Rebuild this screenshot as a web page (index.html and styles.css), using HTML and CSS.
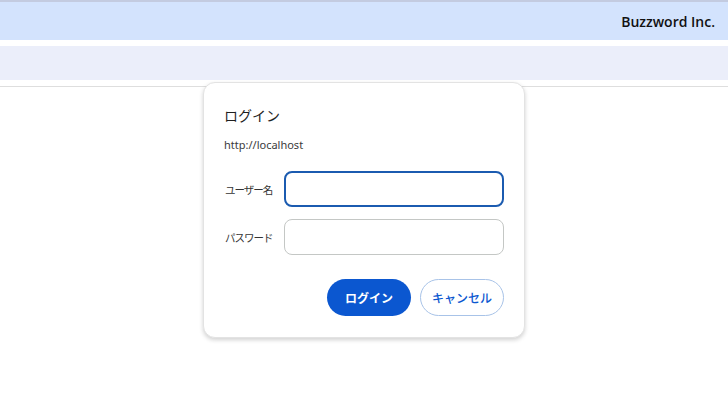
FILE: index.html
```html
<!DOCTYPE html>
<html lang="ja">
<head>
<meta charset="utf-8">
<link rel="stylesheet" href="styles.css">
</head>
<body>
<div class="page">
  <header class="topbar"><span class="brand">Buzzword Inc.</span></header>
  <div class="subbar"></div>
  <div class="rule"></div>
</div>
<div class="dialog">
  <h1 class="title">ログイン</h1>
  <div class="origin">http://localhost</div>
  <div class="field">
    <label class="label">ユーザー名</label>
    <div class="input focused"></div>
  </div>
  <div class="field">
    <label class="label">パスワード</label>
    <div class="input"></div>
  </div>
  <div class="actions">
    <button class="btn primary">ログイン</button>
    <button class="btn secondary">キャンセル</button>
  </div>
</div>
</body>
</html>
```
FILE: styles.css
```css
* { box-sizing: border-box; }
html, body { margin: 0; padding: 0; background: #fff; }
body {
  width: 728px; height: 400px; overflow: hidden; position: relative;
  font-family: "Noto Sans CJK JP", "Noto Sans", sans-serif;
  color: #1f1f1f;
}
.page { display: flex; flex-direction: column; }
.topbar {
  height: 40px;
  border-top: 2px solid #c3cbe0;
  background: #d3e3fd;
  display: flex; align-items: center; justify-content: flex-end;
  padding-right: 13px;
}
.brand {
  font-family: "Open Sans", "Noto Sans", sans-serif;
  font-size: 14px; font-weight: 600; color: #111;
}
.subbar { height: 34px; margin-top: 6px; background: #ebeefa; }
.rule { height: 1px; margin-top: 6px; background: #dedede; }
.dialog {
  position: absolute; left: 203px; top: 82px;
  width: 322px; height: 256px;
  background: #fff;
  border: 1px solid #e3e3e3;
  border-radius: 12px;
  box-shadow: 0 2px 4px rgba(0,0,0,0.18);
  padding: 20px 20px 20px 20px;
}
.title {
  margin: 0; font-size: 14px; font-weight: 400; line-height: 24px;
  color: #1f1f1f;
}
.origin {
  margin-top: 10px; font-size: 11px; line-height: 16px; color: #3b3b3b;
  font-family: "Noto Sans", sans-serif;
}
.field { display: flex; align-items: center; margin-top: 18px; }
.field + .field { margin-top: 12px; }
.label { width: 60px; padding-left: 1px; font-size: 10.5px; letter-spacing: -1px; color: #333; }
.input {
  width: 220px; height: 36px;
  border: 1px solid #c4c7c5; border-radius: 8px;
}
.input.focused { border: 2px solid #1b5bb0; }
.actions { display: flex; justify-content: flex-end; gap: 9px; margin-top: 24px; }
.btn {
  width: 84px; height: 37px; border-radius: 19px;
  font-family: "Noto Sans CJK JP", sans-serif;
  font-size: 12px; font-weight: 700;
  display: flex; align-items: center; justify-content: center;
  padding: 0;
}
.primary { background: #0b57d0; color: #fff; border: none; }
.secondary { background: #fff; color: #0b57d0; border: 1px solid #a8c3e8; font-weight: 500; }
```
